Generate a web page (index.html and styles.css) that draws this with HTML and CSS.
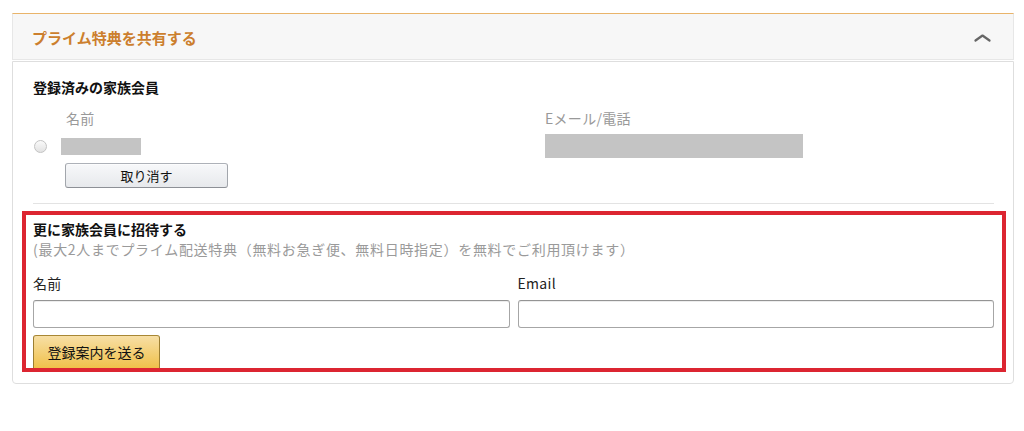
FILE: index.html
```html
<!DOCTYPE html>
<html lang="ja">

<head>
  <meta charset="utf-8" />
  <meta name="viewport" content="width=device-width, initial-scale=1" />
  <title>プライム特典を共有する</title>
  <link rel="stylesheet" href="styles.css">
</head>

<body>
  <div class="panel">
    <header class="panel-head">
      <h2>プライム特典を共有する</h2>
      <svg class="chevron" width="17" height="9" viewBox="0 0 17 9">
        <polyline points="1.5,7.5 8.5,2.5 15.5,7.5" fill="none" stroke="#666" stroke-width="2.2" stroke-linecap="round" stroke-linejoin="round" />
      </svg>
    </header>

    <div class="panel-body">
      <h3>登録済みの家族会員</h3>

      <div class="members">
        <div class="col">
          <div class="col-label name-label">名前</div>
          <div class="member-row">
            <input type="radio" name="member" class="radio" />
            <div class="masked masked-name"></div>
          </div>
          <button type="button" class="btn btn-gray">取り消す</button>
        </div>
        <div class="col">
          <div class="col-label">Eメール/電話</div>
          <div class="member-row">
            <div class="masked masked-mail"></div>
          </div>
        </div>
      </div>

      <hr class="divider" />

      <section class="invite">
        <h3>更に家族会員に招待する</h3>
        <p class="note">(最大2人までプライム配送特典（無料お急ぎ便、無料日時指定）を無料でご利用頂けます）</p>

        <div class="fields">
          <label class="field">
            <span>名前</span>
            <input type="text" />
          </label>
          <label class="field">
            <span>Email</span>
            <input type="text" />
          </label>
        </div>

        <button type="button" class="btn btn-yellow">登録案内を送る</button>
      </section>
    </div>
  </div>
</body>

</html>
```

FILE: styles.css
```css
body {
  margin: 0;
  font-family: "Noto Sans CJK JP", "Noto Sans", sans-serif;
  font-size: 14px;
  color: #111;
  background: #fff;
}

.panel {
  width: 1002px;
  margin: 13px 0 0 12px;
}

.panel-head {
  box-sizing: border-box;
  height: 47px;
  display: flex;
  align-items: center;
  justify-content: space-between;
  padding: 1px 22px 0 19px;
  background: #f7f7f7;
  border: 1px solid #e7e7e7;
  border-top: 1px solid #e9b46a;
}

.panel-head h2 {
  margin: 0;
  font-size: 15px;
  font-weight: bold;
  color: #cc7f2e;
}

.panel-body {
  margin-top: 1px;
  padding: 15px 19px 11px 20px;
  border: 1px solid #dedede;
  border-radius: 0 0 4px 4px;
}

.panel-body h3 {
  margin: 0;
  font-size: 14px;
  line-height: 20px;
  font-weight: bold;
}

.members {
  display: grid;
  grid-template-columns: 512px 1fr;
  margin-top: 11px;
}

.col-label {
  line-height: 20px;
  color: #999;
  letter-spacing: .3px;
}

.name-label {
  padding-left: 33px;
}

.member-row {
  display: flex;
  align-items: center;
  height: 28px;
  margin-top: 4px;
}

.radio {
  appearance: none;
  box-sizing: border-box;
  width: 13px;
  height: 13px;
  margin: 0 14px 0 1px;
  border: 1px solid #c3c3c3;
  border-radius: 50%;
  background: linear-gradient(#fafafa, #e2e2e2);
}

.masked {
  background: #c4c4c4;
}

.masked-name {
  width: 80px;
  height: 17px;
}

.masked-mail {
  width: 258px;
  height: 24px;
}

.btn {
  font-family: inherit;
  color: #111;
  cursor: pointer;
  border-radius: 3px;
  border: 1px solid;
}

.btn-gray {
  width: 163px;
  height: 25px;
  margin: 3px 0 0 32px;
  font-size: 13px;
  background: linear-gradient(#f7f8fa, #e7e9ec);
  border-color: #adb1b8 #a2a6ac #8d9096;
  box-shadow: 0 1px 0 rgba(255, 255, 255, .6) inset;
}

.divider {
  margin: 15px 0 0;
  border: 0;
  border-top: 1px solid #e3e3e3;
}

.invite {
  margin: 7px -12px 0 -11px;
  padding: 4px 8px 0 7px;
  border: 4px solid #dc2531;
}

.note {
  margin: 0;
  line-height: 20px;
  color: #9a9a9a;
  letter-spacing: .7px;
}

.fields {
  display: grid;
  grid-template-columns: 1fr 1fr;
  column-gap: 8px;
  margin-top: 14px;
}

.field {
  display: flex;
  flex-direction: column;
}

.field span {
  line-height: 20px;
  color: #222;
  letter-spacing: .3px;
}

.field input {
  box-sizing: border-box;
  height: 28px;
  margin-top: 7px;
  border: 1px solid #a6a6a6;
  border-top-color: #949494;
  border-radius: 3px;
  box-shadow: 0 1px 0 rgba(255, 255, 255, .5), 0 1px 0 rgba(0, 0, 0, .07) inset;
}

.btn-yellow {
  display: block;
  width: 127px;
  height: 33px;
  margin-top: 7px;
  font-size: 14px;
  background: linear-gradient(#f7dfa5, #f0c14b);
  border-color: #a88734 #9c7e31 #846a29;
  border-bottom: 0;
  border-radius: 3px 3px 0 0;
}
```
